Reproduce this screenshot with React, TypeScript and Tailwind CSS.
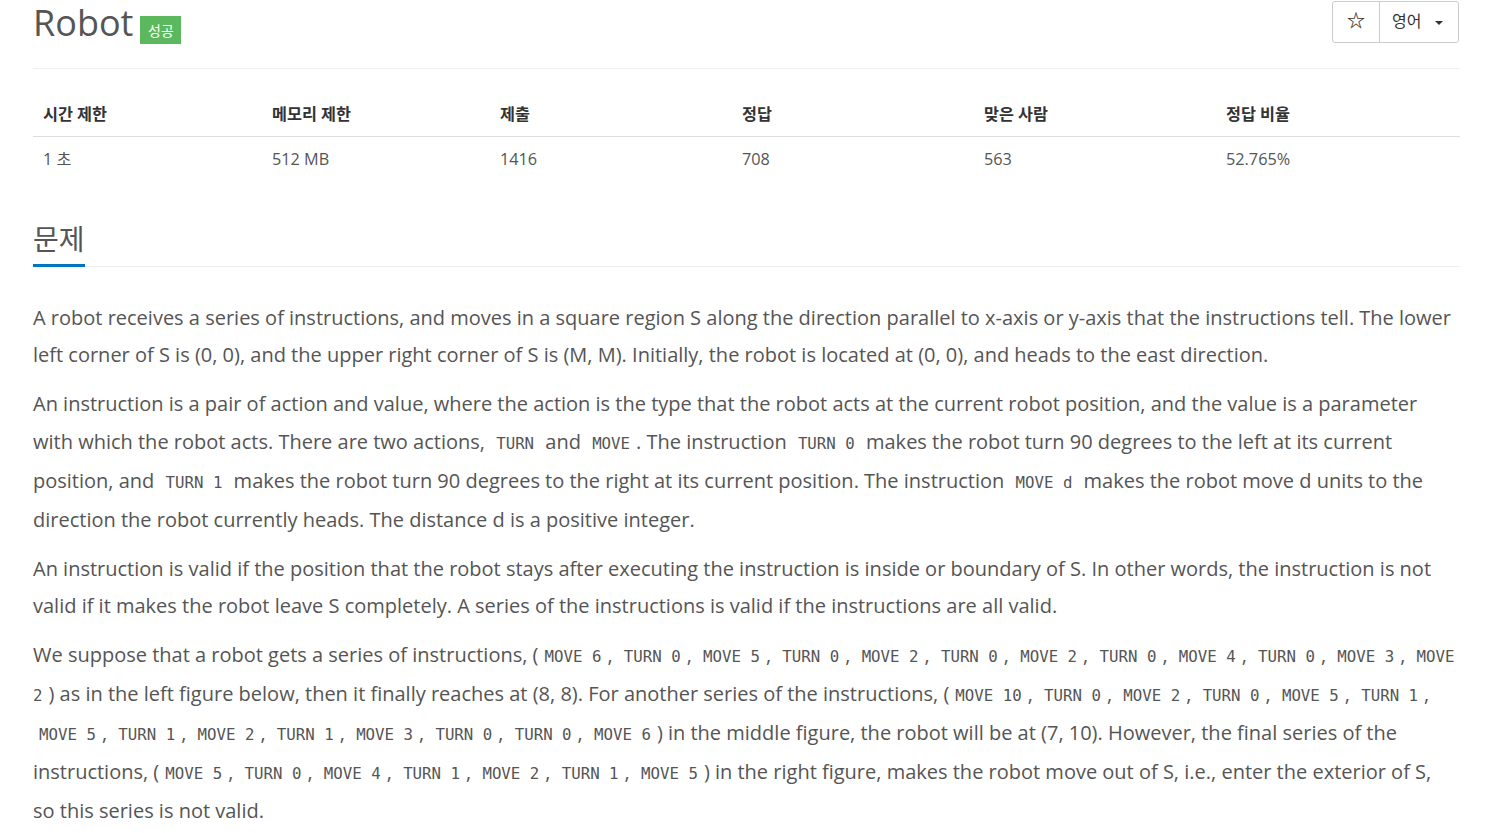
import React from "react";

const C = ({ children }: { children: React.ReactNode }) => (
    <code className="px-[6px] py-[2px] font-['DejaVu_Sans_Mono',monospace] text-[15.75px] leading-[36px] text-[#555]">
        {children}
    </code>
);

const STATS = [
    { label: "시간 제한", value: "1 초" },
    { label: "메모리 제한", value: "512 MB" },
    { label: "제출", value: "1416" },
    { label: "정답", value: "708" },
    { label: "맞은 사람", value: "563" },
    { label: "정답 비율", value: "52.765%" },
];

export default function App() {
    return (
        <div className="min-h-screen bg-white px-[33px] font-['Open_Sans','Noto_Sans_CJK_KR',sans-serif] text-[#555]">
            {/* title */}
            <div className="flex h-[69px] items-start justify-between border-b border-[#eee]">
                <div className="flex items-end pt-[3px]">
                    <h1 className="text-[36px] leading-[40px] text-[#555]">Robot</h1>
                    <span className="mb-[-1px] ml-[7px] flex h-[28px] w-[41px] items-center justify-center bg-[#5cb85c] text-[14px] text-white">
                        성공
                    </span>
                </div>
                <div className="mr-[1px] mt-[1px] flex h-[42px] rounded-[3px] border border-[#ccc] text-[16px] text-[#333]">
                    <button className="flex w-[47px] items-center justify-center border-r border-[#ccc] pb-[4px] text-[18px] font-bold">
                        ☆
                    </button>
                    <button className="flex w-[78px] items-center gap-[14px] pl-[12px] pb-[2px]">
                        영어
                        <span className="mt-[4px] h-0 w-0 border-x-[4px] border-t-[4px] border-x-transparent border-t-[#333]" />
                    </button>
                </div>
            </div>

            {/* stats table */}
            <div className="mt-[33px] grid grid-cols-[229px_228px_242px_242px_242px_1fr] text-[16.25px]">
                {STATS.map((s) => (
                    <div key={s.label} className="border-b border-[#ddd] pb-[10px] pl-[10px] font-bold text-[#333]">
                        {s.label}
                    </div>
                ))}
                {STATS.map((s) => (
                    <div key={s.value} className="pl-[10px] pt-[10px]">
                        {s.value}
                    </div>
                ))}
            </div>

            {/* section heading */}
            <div className="mt-[50px] border-b border-[#eee]">
                <h2 className="mb-[-1px] inline-block border-b-[3px] border-[#0076c0] pb-[8px] text-[28px] leading-[34px] text-[#555]">
                    문제
                </h2>
            </div>

            <div className="mr-[3px] mt-[32px] text-[20px] leading-[37.5px]">
                <p>
                    A robot receives a series of instructions, and moves in a square region S along the direction parallel to x-axis or y-axis that the instructions tell. The lower left corner of S is (0, 0), and the upper right corner of S is (M, M). Initially, the robot is located at (0, 0), and heads to the east direction.
                </p>
                <p className="mt-[11.5px]">
                    An instruction is a pair of action and value, where the action is the type that the robot acts at the current robot position, and the value is a parameter with which the robot acts. There are two actions, <C>TURN</C> and <C>MOVE</C>. The instruction <C>TURN 0</C> makes the robot turn 90 degrees to the left at its current position, and <C>TURN 1</C> makes the robot turn 90 degrees to the right at its current position. The instruction <C>MOVE d</C> makes the robot move d units to the direction the robot currently heads. The distance d is a positive integer.
                </p>
                <p className="mt-[11.5px]">
                    An instruction is valid if the position that the robot stays after executing the instruction is inside or boundary of S. In other words, the instruction is not valid if it makes the robot leave S completely. A series of the instructions is valid if the instructions are all valid.
                </p>
                <p className="mt-[11.5px]">
                    We suppose that a robot gets a series of instructions, (<C>MOVE 6</C>, <C>TURN 0</C>, <C>MOVE 5</C>, <C>TURN 0</C>, <C>MOVE 2</C>, <C>TURN 0</C>, <C>MOVE 2</C>, <C>TURN 0</C>, <C>MOVE 4</C>, <C>TURN 0</C>, <C>MOVE 3</C>, <C>MOVE 2</C>) as in the left figure below, then it finally reaches at (8, 8). For another series of the instructions, (<C>MOVE 10</C>, <C>TURN 0</C>, <C>MOVE 2</C>, <C>TURN 0</C>, <C>MOVE 5</C>, <C>TURN 1</C>, <C>MOVE 5</C>, <C>TURN 1</C>, <C>MOVE 2</C>, <C>TURN 1</C>, <C>MOVE 3</C>, <C>TURN 0</C>, <C>TURN 0</C>, <C>MOVE 6</C>) in the middle figure, the robot will be at (7, 10). However, the final series of the instructions, (<C>MOVE 5</C>, <C>TURN 0</C>, <C>MOVE 4</C>, <C>TURN 1</C>, <C>MOVE 2</C>, <C>TURN 1</C>, <C>MOVE 5</C>) in the right figure, makes the robot move out of S, i.e., enter the exterior of S, so this series is not valid.
                </p>
            </div>
        </div>
    );
}
